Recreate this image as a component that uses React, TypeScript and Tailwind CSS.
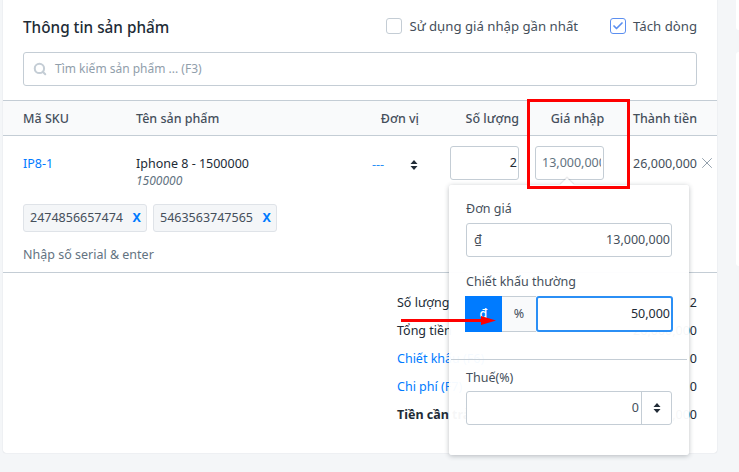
import { Search, X, Check } from "lucide-react";

function Updown({ className = "" }: { className?: string }) {
  return (
    <svg width="8" height="12" viewBox="0 0 8 12" className={className} fill="#212b36">
      <path d="M4 1 L7.5 5 H0.5 Z" />
      <path d="M4 11 L7.5 7 H0.5 Z" />
    </svg>
  );
}

function SerialTag({ value }: { value: string }) {
  return (
    <div className="flex h-[28px] w-[124px] items-center justify-between rounded-[3px] border border-[#dfe3e8] bg-[#f4f6f8] pl-[6px] pr-[5px] text-[#454f5b]">
      <span>{value}</span>
      <span className="font-bold text-[#007bff]">X</span>
    </div>
  );
}

function SummaryRow({ label, value, className = "" }: { label: string; value: string; className?: string }) {
  return (
    <div className="flex h-[28px] items-center justify-between">
      <span className={className}>{label}</span>
      <span className="text-[#212b36]">{value}</span>
    </div>
  );
}

export default function App() {
  return (
    <div className="relative h-[472px] w-[739px] overflow-hidden bg-[#f4f6f8] font-['Noto_Sans','Open_Sans',sans-serif] text-[12.5px] leading-[18px] text-[#212b36]">
      <div className="flex h-[453px] gap-[19px] pl-[3px]">
        <div className="relative h-full w-[714px] shrink-0 rounded-b-[3px] bg-white shadow-[0_0_1px_rgba(99,115,129,0.4)]">
          <div className="flex h-[100px] flex-col px-[20px]">
            <div className="flex h-[52px] items-center pt-[1px]">
              <h2 className="text-[15.3px] font-medium text-[#212b36]">Thông tin sản phẩm</h2>
              <label className="ml-auto flex items-center gap-[7px] pb-[1px] text-[13.2px] text-[#454f5b]">
                <span className="h-[16px] w-[16px] rounded-[3px] border border-[#c4cdd5] bg-white" />
                <span>Sử dụng giá nhập gần nhất</span>
              </label>
              <label className="ml-[32px] flex items-center gap-[7px] pb-[1px] text-[13.2px] text-[#454f5b]">
                <span className="flex h-[16px] w-[16px] items-center justify-center rounded-[3px] border border-[#5c8ff0] bg-white">
                  <Check size={12} strokeWidth={3.5} className="text-[#5c8ff0]" />
                </span>
                <span>Tách dòng</span>
              </label>
            </div>
            <div className="flex h-[34px] items-center gap-[8px] rounded-[3px] border border-[#c4cdd5] bg-white pl-[9px] text-[#919eab]">
              <Search size={14} strokeWidth={3.5} className="text-[#c4cdd5]" />
              <span className="text-[12px]">Tìm kiếm sản phẩm ... (F3)</span>
            </div>
          </div>

          <div className="grid h-[36px] grid-cols-[113px_183px_100px_100px_100px_78px] items-center border-y border-[#c4cdd5] bg-[#f9fafb] px-[20px] pt-[1px] font-medium text-[#454f5b]">
            <span>Mã SKU</span>
            <span>Tên sản phẩm</span>
            <span className="text-right">Đơn vị</span>
            <span className="text-right">Số lượng</span>
            <span className="pl-[17px] text-center">Giá nhập</span>
            <span className="whitespace-nowrap text-right">Thành tiền</span>
          </div>

          <div className="grid grid-cols-[113px_183px_100px_100px_100px_78px] px-[20px] pt-[10px]">
            <a className="pt-[9px] text-[#007bff]">IP8-1</a>
            <div className="pt-[9px]">
              <div className="text-[#212b36]">Iphone 8 - 1500000</div>
              <div className="text-[12px] italic leading-[16px] text-[#637381]">1500000</div>
            </div>
            <div className="flex items-start justify-end gap-[26px] pr-[1px] pt-[11px]">
              <span className="leading-[16px] text-[#2b8ff5]">---</span>
              <Updown className="mt-[2px]" />
            </div>
            <div className="flex justify-end">
              <div className="flex h-[34px] w-[69px] items-center justify-end rounded-[3px] border border-[#c4cdd5] pr-[1px]">2</div>
            </div>
            <div className="pl-[16px]">
              <div className="flex h-[34px] w-[69px] items-center rounded-[3px] border border-[#c4cdd5] pl-[6px] whitespace-nowrap text-[#637381]">
                <div className="w-[59px] overflow-hidden">13,000,000</div>
              </div>
            </div>
            <div className="relative whitespace-nowrap pt-[9px] text-right text-[#454f5b]">
              <span>26,000,000</span>
              <X size={18} strokeWidth={1.3} className="absolute -right-[19px] top-[8px] text-[#919eab]" />
            </div>
          </div>

          <div className="flex gap-[6px] px-[20px] pt-[15px]">
            <SerialTag value="2474856657474" />
            <SerialTag value="5463563747565" />
          </div>
          <div className="border-b border-[#c4cdd5] px-[20px] pb-[8px] pt-[14px] text-[#637381]">Nhập số serial &amp; enter</div>

          <div className="ml-[394px] mr-[20px] pt-[16px] text-[#212b36]">
            <SummaryRow label="Số lượng" value="2" />
            <SummaryRow label="Tổng tiền" value="26,000,000" />
            <SummaryRow label="Chiết khấu (F6)" value="0" className="text-[#007bff]" />
            <SummaryRow label="Chi phí (F7)" value="0" className="text-[#007bff]" />
            <SummaryRow label="Tiền cần trả" value="26,000,000" className="font-bold" />
          </div>
        </div>
        <div className="flex h-full flex-1 flex-col gap-[22px]">
          <div className="h-[30px] rounded-bl-[3px] bg-white" />
          <div className="h-[214px] rounded-l-[3px] bg-white" />
        </div>
      </div>

      {/* popover */}
      <div className="absolute left-[449px] top-[185px] h-[270px] w-[240px] rounded-[3px] bg-white/96 px-[17px] pt-[15px] shadow-[0_1px_5px_rgba(33,43,54,0.3)]">
        <div className="absolute -top-[5px] left-[113px] h-[10px] w-[10px] rotate-45 bg-white shadow-[-1px_-1px_1px_rgba(33,43,54,0.12)]" />
        <div className="relative text-[#454f5b]">Đơn giá</div>
        <div className="mt-[5px] flex h-[34px] items-center justify-between rounded-[3px] border border-[#c4cdd5] bg-white pl-[7px] pr-[1px] text-[#454f5b]">
          <span>₫</span>
          <span>13,000,000</span>
        </div>
        <div className="mt-[16px] text-[#454f5b]">Chiết khấu thường</div>
        <div className="-ml-[1px] mt-[5px] flex h-[36px] w-[208px]">
          <span className="flex w-[37px] items-center justify-center bg-[#007bff] font-medium text-white">₫</span>
          <span className="flex w-[34px] items-center justify-center border-y border-[#c4cdd5] bg-[#f9fafb] text-[#454f5b]">%</span>
          <span className="flex flex-1 items-center justify-end rounded-[3px] border-2 border-[#2b8ff5] bg-white pr-[1px]">50,000</span>
        </div>
        <div className="-mx-[15px] mt-[27px] border-t border-[#c4cdd5]" />
        <div className="mt-[9px] text-[#454f5b]">Thuế(%)</div>
        <div className="mt-[4px] flex h-[34px] items-center rounded-[3px] border border-[#c4cdd5] bg-white text-[#454f5b]">
          <span className="flex-1 pr-[2px] text-right">0</span>
          <span className="flex h-full w-[30px] items-center justify-center border-l border-[#c4cdd5]"><Updown /></span>
        </div>
      </div>

      {/* red annotation */}
      <div className="absolute left-[527px] top-[99px] h-[90px] w-[103px] border-[3px] border-[#fe0000]" />

      {/* red arrow */}
      <svg className="absolute left-[401px] top-[315px]" width="96" height="11" viewBox="0 0 96 11">
        <path d="M0 4 H80 V1 L95 5.5 L80 10 V7 H0 Z" fill="#fe0000" />
      </svg>
    </div>
  );
}
